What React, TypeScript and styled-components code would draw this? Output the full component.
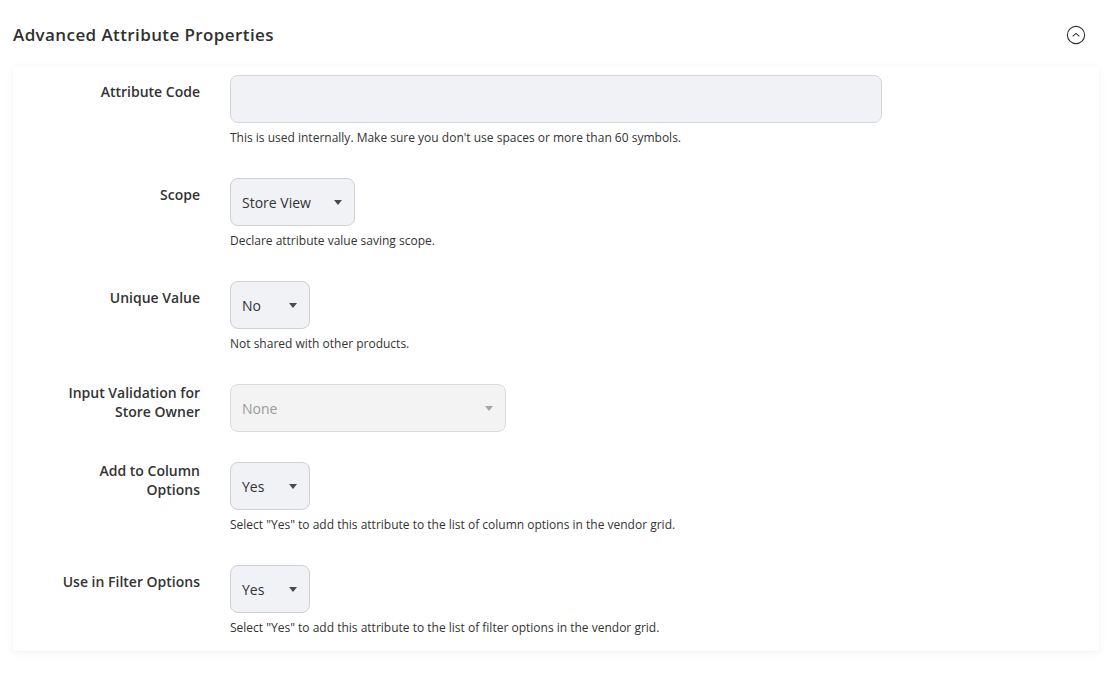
import styled, { createGlobalStyle } from "styled-components";
import React from "react";

const GlobalStyle = createGlobalStyle`
  body {
    margin: 0;
    background: #ffffff;
    font-family: "Open Sans", "Liberation Sans", sans-serif;
    color: #333333;
  }
`;

const Page = styled.div`
  padding: 0 15px 32px 13px;
`;
const Header = styled.div`
  display: flex;
  align-items: center;
  justify-content: space-between;
  height: 66px;
  padding-top: 3px;
  box-sizing: border-box;
`;
const Title = styled.h2`
  margin: 0;
  font-size: 17px;
  font-weight: 600;
  color: #303030;
  letter-spacing: 0.4px;
`;
const Toggle = styled.button`
  border: 0;
  background: none;
  padding: 0;
  margin-right: 13px;
  width: 20px;
  height: 20px;
  display: flex;
  cursor: pointer;
`;
const Card = styled.div`
  background: #ffffff;
  border-radius: 3px;
  box-shadow: 0 2px 10px rgba(0, 0, 0, 0.05), 0 0 2px rgba(0, 0, 0, 0.04);
  padding: 9px 0 13px 0;
`;
const Row = styled.div`
  display: grid;
  grid-template-columns: 187px 1fr;
  column-gap: 30px;
  margin-bottom: 30px;
  &:last-child {
    margin-bottom: 0;
  }
`;
const Label = styled.label<{ $multi?: boolean }>`
  text-align: right;
  font-size: 14px;
  font-weight: 600;
  color: #333333;
  line-height: ${(p) => (p.$multi ? "19px" : "20px")};
  padding-top: ${(p) => (p.$multi ? "0" : "7px")};
  margin-top: ${(p) => (p.$multi ? "-1px" : "0")};
`;
const Control = styled.div`
  display: flex;
  flex-direction: column;
  align-items: flex-start;
`;
const TextInput = styled.input`
  width: 652px;
  height: 48px;
  box-sizing: border-box;
  border: 1px solid #d6d6da;
  border-radius: 8px;
  background: #f1f2f6;
  font-family: inherit;
  font-size: 14px;
  padding: 0 12px;
  outline: none;
`;
const Select = styled.div<{ $width: number; $disabled?: boolean }>`
  width: ${(p) => p.$width}px;
  height: 48px;
  box-sizing: border-box;
  display: flex;
  align-items: center;
  justify-content: space-between;
  padding: 0 12px 0 11px;
  border: 1px solid ${(p) => (p.$disabled ? "#dadada" : "#cfcfd4")};
  border-radius: 8px;
  background: ${(p) => (p.$disabled ? "#f3f3f3" : "#f1f2f6")};
  color: ${(p) => (p.$disabled ? "#9a9a9a" : "#333333")};
  font-size: 14px;
`;
const Arrow = styled.span<{ $disabled?: boolean }>`
  width: 0;
  height: 0;
  border-left: 4px solid transparent;
  border-right: 4px solid transparent;
  border-top: 5px solid ${(p) => (p.$disabled ? "#a6a6a6" : "#4a4a4a")};
`;
const Note = styled.div`
  margin-top: 5px;
  font-size: 12px;
  line-height: 20px;
  color: #333333;
`;

type Field = {
  label: React.ReactNode;
  multi?: boolean;
  kind: "text" | "select";
  value?: string;
  width?: number;
  disabled?: boolean;
  note?: string;
};

const fields: Field[] = [
  {
    label: "Attribute Code",
    kind: "text",
    note: "This is used internally. Make sure you don't use spaces or more than 60 symbols.",
  },
  {
    label: "Scope",
    kind: "select",
    value: "Store View",
    width: 125,
    note: "Declare attribute value saving scope.",
  },
  {
    label: "Unique Value",
    kind: "select",
    value: "No",
    width: 80,
    note: "Not shared with other products.",
  },
  {
    label: (
      <>
        Input Validation for
        <br />
        Store Owner
      </>
    ),
    multi: true,
    kind: "select",
    value: "None",
    width: 276,
    disabled: true,
  },
  {
    label: (
      <>
        Add to Column
        <br />
        Options
      </>
    ),
    multi: true,
    kind: "select",
    value: "Yes",
    width: 80,
    note: 'Select "Yes" to add this attribute to the list of column options in the vendor grid.',
  },
  {
    label: "Use in Filter Options",
    kind: "select",
    value: "Yes",
    width: 80,
    note: 'Select "Yes" to add this attribute to the list of filter options in the vendor grid.',
  },
];

export default function App() {
  return (
    <Page>
      <GlobalStyle />
      <Header>
        <Title>Advanced Attribute Properties</Title>
        <Toggle aria-label="Collapse">
          <svg width="20" height="20" viewBox="0 0 20 20" fill="none">
            <circle cx="10" cy="10" r="8.6" stroke="#333" strokeWidth="1.1" />
            <path d="M6.6 11.4 L10 8.4 L13.4 11.4" stroke="#333" strokeWidth="1.1" />
          </svg>
        </Toggle>
      </Header>
      <Card>
        {fields.map((f, i) => (
          <Row key={i}>
            <Label $multi={f.multi}>{f.label}</Label>
            <Control>
              {f.kind === "text" ? (
                <TextInput type="text" />
              ) : (
                <Select $width={f.width ?? 80} $disabled={f.disabled}>
                  <span>{f.value}</span>
                  <Arrow $disabled={f.disabled} />
                </Select>
              )}
              {f.note ? <Note>{f.note}</Note> : null}
            </Control>
          </Row>
        ))}
      </Card>
    </Page>
  );
}
